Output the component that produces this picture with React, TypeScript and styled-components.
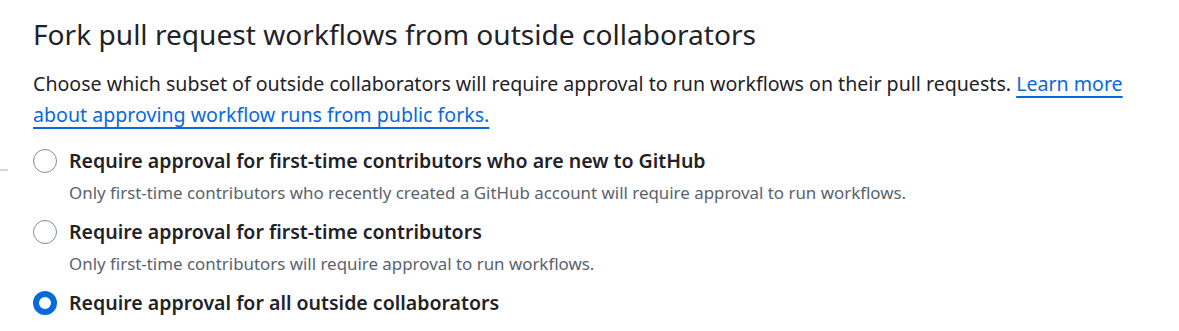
import React from 'react'
import styled, { createGlobalStyle } from 'styled-components'

const GlobalStyle = createGlobalStyle`
  body {
    margin: 0;
    background: #fff;
    font-family: "Noto Sans", "Liberation Sans", sans-serif;
    color: #1f2328;
  }
`

const Page = styled.div`
  position: relative;
  padding: 14px 0 0 33px;
  width: 1179px;
  height: 331px;
  box-sizing: border-box;
  overflow: hidden;
`

const EdgeRule = styled.div`
  position: absolute;
  left: 0;
  top: 169px;
  width: 8px;
  height: 2px;
  background: #d1d9e0;
`

const Heading = styled.h2`
  margin: 0 0 14px;
  font-size: 28.1px;
  font-weight: 400;
  line-height: 40px;
`

const Intro = styled.p`
  margin: 0 0 15px;
  font-size: 19.6px;
  line-height: 31px;
  max-width: 1100px;
`

const Link = styled.a`
  color: #0969da;
  text-decoration: underline;
  text-decoration-thickness: 2px;
  text-underline-offset: 5px;
`

const Options = styled.div`
  display: flex;
  flex-direction: column;
  gap: 7px;
`

const Option = styled.label`
  display: grid;
  grid-template-columns: 24px 1fr;
  column-gap: 12px;
  align-items: center;
`

const Radio = styled.span<{ $checked?: boolean }>`
  width: 24px;
  height: 24px;
  box-sizing: border-box;
  border-radius: 50%;
  border: ${p => (p.$checked ? '6px solid #0969da' : '1px solid #818b98')};
  background: #fff;
`

const Label = styled.span`
  font-size: 19.55px;
  font-weight: 600;
  line-height: 32px;
`

const Note = styled.span`
  grid-column: 2;
  font-size: 16.9px;
  line-height: 32px;
  color: #59636e;
`

const options = [
  {
    label: 'Require approval for first-time contributors who are new to GitHub',
    note: 'Only first-time contributors who recently created a GitHub account will require approval to run workflows.',
  },
  {
    label: 'Require approval for first-time contributors',
    note: 'Only first-time contributors will require approval to run workflows.',
  },
  { label: 'Require approval for all outside collaborators', checked: true },
]

export default function App() {
  return (
    <Page>
      <GlobalStyle />
      <EdgeRule />
      <Heading>Fork pull request workflows from outside collaborators</Heading>
      <Intro>
        Choose which subset of outside collaborators will require approval to run workflows on their pull requests.{' '}
        <Link href="#">Learn more about approving workflow runs from public forks.</Link>
      </Intro>
      <Options>
        {options.map(o => (
          <Option key={o.label}>
            <Radio $checked={o.checked} />
            <Label>{o.label}</Label>
            {o.note && <Note>{o.note}</Note>}
          </Option>
        ))}
      </Options>
    </Page>
  )
}
